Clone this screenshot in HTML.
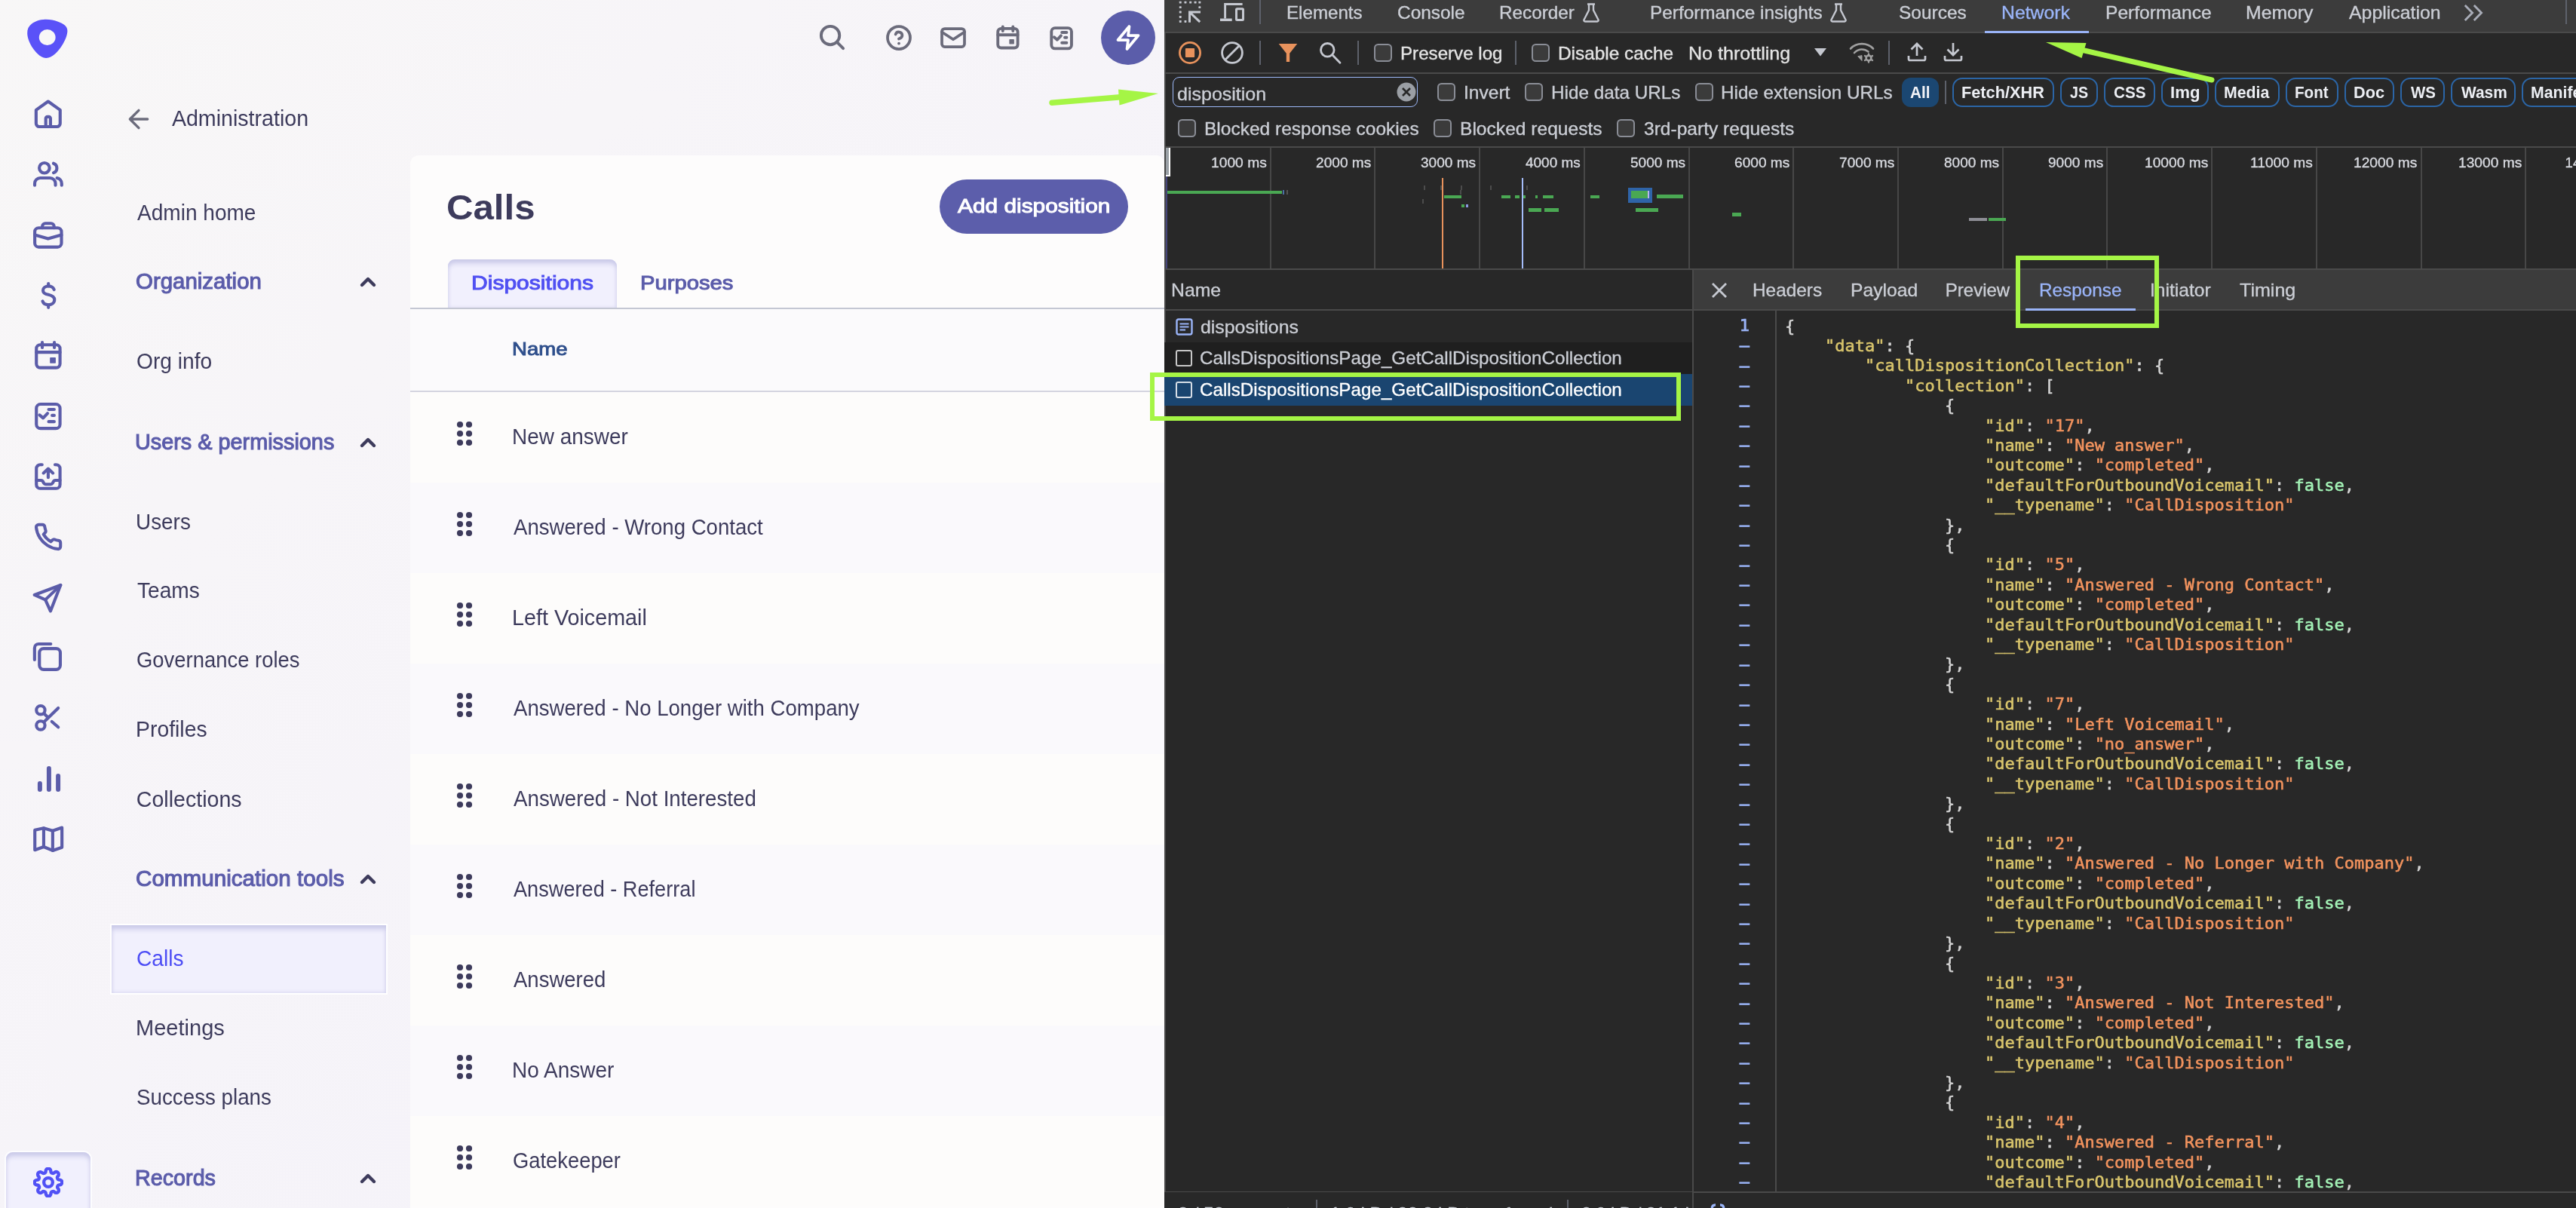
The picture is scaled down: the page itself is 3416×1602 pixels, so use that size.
<!DOCTYPE html>
<html lang="en"><head><meta charset="utf-8"><title>Calls - Dispositions</title><style>
html,body{margin:0;padding:0}
body{width:3416px;height:1602px;overflow:hidden;position:relative;background:#f7f6f8;font-family:"Liberation Sans",sans-serif;}
.b{position:absolute;box-sizing:border-box}
.t{position:absolute;white-space:nowrap;line-height:1;transform-origin:0 50%;}
.m{font-family:"DejaVu Sans Mono","Liberation Mono",monospace}
.cb{position:absolute;box-sizing:border-box;width:24px;height:24px;border:2px solid #8a8d96;border-radius:5.5px;background:#3b3b3b}
.pill{position:absolute;box-sizing:border-box;height:39px;top:103px;border:2px solid #2b65a6;border-radius:13px}
.k{color:#d9c56c}.s{color:#f2935e}.a{color:#a3f2b6}
</style></head>
<body>
<div id="root" style="position:absolute;left:0;top:0;width:3416px;height:1602px;will-change:transform">
<div class="b" id="app" style="left:0;top:0;width:1544px;height:1602px;background:linear-gradient(135deg,#f8f7f7 0%,#f7f5f8 30%,#f5f3f9 70%,#f3f1fa 100%);overflow:hidden">
<svg class="b" style="left:36px;top:25px" width="54" height="53" viewBox="0 0 54 53"><path d="M23.700 .800C30 .600 36 2 39.600 3.200 44 4.800 48 6.500 50.200 8.800 52.600 11 53.600 14 53.400 16.800 53 21 52 24.500 50.200 28 47 35 42 42 37 46.600 33 50 29 52 25 51.900 21 51.800 17 49.500 13.500 46 11 43.500 9.500 41.500 7.800 39.300 3.500 33 .500 26 .200 19.400 0 14 2 9.800 5.850 6.850 10 3.500 16.500 1 23.700 .800Z" fill="#5a52f8"/><ellipse cx="26.700" cy="24.600" rx="10.900" ry="10.500" fill="#f8f7f7"/></svg>
<svg class="b" style="left:42.0px;top:129.0px;color:#5b5ca9;" width="44" height="44" viewBox="0 0 24 24" fill="none" stroke="#5b5ca9" stroke-width="2.25" stroke-linecap="round" stroke-linejoin="round"><path d="M3.2 9.2 11.9 3l8.7 6.2V19a2.300 2.300 0 0 1-2.300 2.300H5.500A2.300 2.300 0 0 1 3.200 19z"/><path d="M10.200 21.300v-6a1.200 1.200 0 0 1 1.200-1.200h1a1.200 1.200 0 0 1 1.200 1.200v6"/></svg>
<svg class="b" style="left:42.0px;top:209.0px;color:#5b5ca9;" width="44" height="44" viewBox="0 0 24 24" fill="none" stroke="#5b5ca9" stroke-width="2.25" stroke-linecap="round" stroke-linejoin="round"><circle cx="9.200" cy="7.500" r="3.700"/><path d="M2.200 20v-1.300a4 4 0 0 1 4-4h7a4 4 0 0 1 4 4V20"/><path d="M15.800 4.200a3.600 3.600 0 0 1 0 6.800"/><path d="M18.300 14.800a4 4 0 0 1 3.400 4V20"/></svg>
<svg class="b" style="left:42.0px;top:290.0px;color:#5b5ca9;" width="44" height="44" viewBox="0 0 24 24" fill="none" stroke="#5b5ca9" stroke-width="2.25" stroke-linecap="round" stroke-linejoin="round"><rect x="2.250" y="6.700" width="19.300" height="13.800" rx="2.800"/><path d="M7.700 6.700V5.600a2.200 2.200 0 0 1 2.200-2.200h4.100a2.200 2.200 0 0 1 2.200 2.200v1.100"/><path d="M2.250 11.700l9.600 2.800 9.700-2.800"/></svg>
<svg class="b" style="left:42.0px;top:369.0px;color:#5b5ca9;" width="44" height="44" viewBox="0 0 24 24" fill="none" stroke="#5b5ca9" stroke-width="2.25" stroke-linecap="round" stroke-linejoin="round"><path d="M12.100 3.800v1.900M12.100 19.200v2"/><path d="M16.200 8.200C15.600 6.600 14.200 5.700 12.200 5.700 9.800 5.700 8.200 7 8.200 8.800c0 1.800 1.400 2.600 3.900 3.100 2.600.6 4.400 1.600 4.400 3.700 0 2.200-1.900 3.600-4.400 3.600-2.200 0-3.700-1-4.200-2.600"/></svg>
<svg class="b" style="left:42.0px;top:449.0px;color:#5b5ca9;" width="44" height="44" viewBox="0 0 24 24" fill="none" stroke="#5b5ca9" stroke-width="2.25" stroke-linecap="round" stroke-linejoin="round"><rect x="3.400" y="4.500" width="17.100" height="16.600" rx="2.800"/><path d="M16.400 2.800v3.700M7.650 2.800v3.700M3.400 9.900h17.100"/><rect x="13.600" y="14.100" width="3.400" height="3.300" fill="currentColor" stroke-width="0.800"/></svg>
<svg class="b" style="left:42.0px;top:530.0px;color:#5b5ca9;" width="44" height="44" viewBox="0 0 24 24" fill="none" stroke="#5b5ca9" stroke-width="2.25" stroke-linecap="round" stroke-linejoin="round"><rect x="3.400" y="3.300" width="17.100" height="17.500" rx="3"/><path d="M5.700 11.100l2.600 2.200 3.200-3.400"/><path d="M12.300 7.100h4M14.800 11.400h1.500M12.300 15.900h4"/></svg>
<svg class="b" style="left:42.0px;top:610.0px;color:#5b5ca9;" width="44" height="44" viewBox="0 0 24 24" fill="none" stroke="#5b5ca9" stroke-width="2.25" stroke-linecap="round" stroke-linejoin="round"><path d="M7.500 3.400H6.200a2.800 2.800 0 0 0-2.800 2.800v11.600a2.800 2.800 0 0 0 2.800 2.800h11.500a2.800 2.800 0 0 0 2.800-2.800V6.200a2.800 2.800 0 0 0-2.800-2.800H16.900"/><path d="M11.950 12.700V6.400M8.500 9.500l3.450-3.200 3.450 3.200"/><path d="M3.400 14.700h3.400c.6 0 1 .3 1.300.8l.7 1.300c.3.500.8.800 1.300.800h3.700c.600 0 1-.300 1.300-.800l.7-1.300c.3-.5.800-.8 1.300-.8h3.400"/></svg>
<svg class="b" style="left:42.1px;top:690.0px;color:#5b5ca9;" width="44" height="44" viewBox="0 0 24 24" fill="none" stroke="#5b5ca9" stroke-width="2.25" stroke-linecap="round" stroke-linejoin="round"><g transform="translate(12 12) scale(.885) translate(-12 -12)" stroke-width="2.500"><path d="M22 16.920v3a2 2 0 0 1-2.180 2 19.790 19.790 0 0 1-8.630-3.070 19.500 19.500 0 0 1-6-6 19.790 19.790 0 0 1-3.070-8.670A2 2 0 0 1 4.110 2h3a2 2 0 0 1 2 1.720 12.840 12.840 0 0 0 .7 2.810 2 2 0 0 1-.45 2.110L8.090 9.910a16 16 0 0 0 6 6l1.270-1.270a2 2 0 0 1 2.110-.45 12.840 12.840 0 0 0 2.810.7A2 2 0 0 1 22 16.920z"/></g></svg>
<svg class="b" style="left:42.0px;top:771.0px;color:#5b5ca9;" width="44" height="44" viewBox="0 0 24 24" fill="none" stroke="#5b5ca9" stroke-width="2.25" stroke-linecap="round" stroke-linejoin="round"><path d="M20.900 2.700 2 9.800l7.900 3.500 3.700 8.200z"/><path d="M9.900 13.300 20.900 2.700"/></svg>
<svg class="b" style="left:42.0px;top:849.0px;color:#5b5ca9;" width="44" height="44" viewBox="0 0 24 24" fill="none" stroke="#5b5ca9" stroke-width="2.25" stroke-linecap="round" stroke-linejoin="round"><rect x="5.600" y="6.050" width="15.100" height="15.150" rx="3"/><path d="M13.800 2.700H5.100a3 3 0 0 0-3 3v8.500"/></svg>
<svg class="b" style="left:42.0px;top:930.0px;color:#5b5ca9;" width="44" height="44" viewBox="0 0 24 24" fill="none" stroke="#5b5ca9" stroke-width="2.25" stroke-linecap="round" stroke-linejoin="round"><circle cx="6.500" cy="6.400" r="3.100"/><circle cx="6.500" cy="17.400" r="3.100"/><path d="M19.200 4.900 9 14.900M14.600 14.700l4.600 4M8.900 8.900l2.800 2.700"/></svg>
<svg class="b" style="left:43.0px;top:1011.0px;color:#5b5ca9;" width="44" height="44" viewBox="0 0 24 24" fill="none" stroke="#5b5ca9" stroke-width="2.25" stroke-linecap="round" stroke-linejoin="round"><path d="M11.950 19.600V4.300M18.600 19.600V9.800M5.400 19.600v-4.400" stroke-width="3.250"/></svg>
<svg class="b" style="left:42.0px;top:1090.0px;color:#5b5ca9;" width="44" height="44" viewBox="0 0 24 24" fill="none" stroke="#5b5ca9" stroke-width="2.25" stroke-linecap="round" stroke-linejoin="round"><path d="M2.300 5.900v14.400l6.400-2.300 6.500 2.700 6.700-2.300V4.100l-6.700 2.300-6.500-1.900z"/><path d="M8.700 4.500V18M15.200 6.400v14.300"/></svg>
<div class="b" style="left:8px;top:1528px;width:112px;height:90px;border-radius:9px;background:#f1f0fd;box-shadow:inset 0 8px 7px -3px #c9c9e8, inset 0 0 5px 1px #d9d8f1, 0 0 0 2px #fdfdff"></div>
<svg class="b" style="left:43.8px;top:1548.0px;" width="40" height="40" viewBox="0 0 24 24" fill="none" stroke="#5151f5" stroke-width="2.6" stroke-linecap="round" stroke-linejoin="round"><circle cx="12" cy="12" r="3.500"/><path d="M19.4 15a1.65 1.65 0 0 0 .33 1.82l.06.06a2 2 0 0 1 0 2.83 2 2 0 0 1-2.83 0l-.06-.06a1.65 1.65 0 0 0-1.82-.33 1.65 1.65 0 0 0-1 1.51V21a2 2 0 0 1-2 2 2 2 0 0 1-2-2v-.09A1.65 1.65 0 0 0 9 19.4a1.65 1.65 0 0 0-1.82.33l-.06.06a2 2 0 0 1-2.83 0 2 2 0 0 1 0-2.83l.06-.06a1.65 1.65 0 0 0 .33-1.82 1.65 1.65 0 0 0-1.51-1H3a2 2 0 0 1-2-2 2 2 0 0 1 2-2h.09A1.65 1.65 0 0 0 4.6 9a1.65 1.65 0 0 0-.33-1.82l-.06-.06a2 2 0 0 1 0-2.83 2 2 0 0 1 2.83 0l.06.06a1.65 1.65 0 0 0 1.82.33H9a1.65 1.65 0 0 0 1-1.51V3a2 2 0 0 1 2-2 2 2 0 0 1 2 2v.09a1.65 1.65 0 0 0 1 1.51 1.65 1.65 0 0 0 1.82-.33l.06-.06a2 2 0 0 1 2.83 0 2 2 0 0 1 0 2.83l-.06.06a1.65 1.65 0 0 0-.33 1.82V9a1.65 1.65 0 0 0 1.51 1H21a2 2 0 0 1 2 2 2 2 0 0 1-2 2h-.09a1.65 1.65 0 0 0-1.51 1z"/></svg>
<svg class="b" style="left:164.0px;top:138.0px;" width="40" height="40" viewBox="0 0 24 24" fill="none" stroke="#6b6b7b" stroke-width="2" stroke-linecap="round" stroke-linejoin="round"><path d="M19 12H5M12 19l-7-7 7-7"/></svg>
<span class="t" style="left:227.9px;top:142.9px;font-size:28.6px;color:#3d3b5c;">Administration</span>
<span class="t" style="left:182.2px;top:268.2px;font-size:28.6px;color:#3d3b5c;transform:scaleX(0.9810);">Admin home</span>
<span class="t" style="left:180.0px;top:358.7px;font-size:28.6px;color:#5b5caa;-webkit-text-stroke:1.09px;transform:scaleX(1.0293);">Organization</span>
<svg class="b" style="left:472.0px;top:358.0px;" width="32" height="32" viewBox="0 0 24 24" fill="none" stroke="#3d3b5c" stroke-width="3.3" stroke-linecap="round" stroke-linejoin="round"><path d="M6 15l6-6 6 6"/></svg>
<span class="t" style="left:181.0px;top:465.2px;font-size:28.6px;color:#3d3b5c;transform:scaleX(0.9851);">Org info</span>
<span class="t" style="left:179.2px;top:571.5px;font-size:28.6px;color:#5b5caa;-webkit-text-stroke:1.09px;transform:scaleX(1.0081);">Users &amp; permissions</span>
<svg class="b" style="left:472.0px;top:570.8px;" width="32" height="32" viewBox="0 0 24 24" fill="none" stroke="#3d3b5c" stroke-width="3.3" stroke-linecap="round" stroke-linejoin="round"><path d="M6 15l6-6 6 6"/></svg>
<span class="t" style="left:180.1px;top:677.7px;font-size:28.6px;color:#3d3b5c;transform:scaleX(0.9756);">Users</span>
<span class="t" style="left:181.7px;top:769.2px;font-size:28.6px;color:#3d3b5c;transform:scaleX(0.9835);">Teams</span>
<span class="t" style="left:180.9px;top:861.2px;font-size:28.6px;color:#3d3b5c;transform:scaleX(0.9594);">Governance roles</span>
<span class="t" style="left:180.0px;top:953.2px;font-size:28.6px;color:#3d3b5c;transform:scaleX(0.9925);">Profiles</span>
<span class="t" style="left:180.8px;top:1045.6px;font-size:28.6px;color:#3d3b5c;">Collections</span>
<span class="t" style="left:179.9px;top:1150.7px;font-size:28.6px;color:#5b5caa;-webkit-text-stroke:1.09px;transform:scaleX(1.0360);">Communication tools</span>
<svg class="b" style="left:472.0px;top:1150.0px;" width="32" height="32" viewBox="0 0 24 24" fill="none" stroke="#3d3b5c" stroke-width="3.3" stroke-linecap="round" stroke-linejoin="round"><path d="M6 15l6-6 6 6"/></svg>
<div class="b" style="left:146px;top:1224.5px;width:368px;height:94.5px;background:#f1f0fd;border:2.5px solid #ffffff;box-shadow:inset 0 8px 7px -3px #c9c9e8, inset 0 0 5px 1px #d9d8f1"></div>
<span class="t" style="left:180.9px;top:1257.2px;font-size:28.6px;color:#4d4df5;transform:scaleX(0.9855);">Calls</span>
<span class="t" style="left:179.9px;top:1348.7px;font-size:28.6px;color:#3d3b5c;transform:scaleX(1.0158);">Meetings</span>
<span class="t" style="left:181.0px;top:1440.7px;font-size:28.6px;color:#3d3b5c;transform:scaleX(0.9705);">Success plans</span>
<span class="t" style="left:179.0px;top:1547.5px;font-size:28.6px;color:#5b5caa;-webkit-text-stroke:1.09px;transform:scaleX(1.0047);">Records</span>
<svg class="b" style="left:472.0px;top:1546.8px;" width="32" height="32" viewBox="0 0 24 24" fill="none" stroke="#3d3b5c" stroke-width="3.3" stroke-linecap="round" stroke-linejoin="round"><path d="M6 15l6-6 6 6"/></svg>
<svg class="b" style="left:1083.5px;top:29.5px;" width="39" height="39" viewBox="0 0 24 24" fill="none" stroke="#6b6b7b" stroke-width="2.4" stroke-linecap="round" stroke-linejoin="round"><circle cx="10.5" cy="10.5" r="7.5"/><path d="M21 21l-5.2-5.2"/></svg>
<svg class="b" style="left:1174.0px;top:31.5px;" width="36" height="36" viewBox="0 0 24 24" fill="none" stroke="#6b6b7b" stroke-width="2.5" stroke-linecap="round" stroke-linejoin="round"><circle cx="12" cy="12" r="10"/><path d="M9.09 9a3 3 0 0 1 5.83 1c0 2-3 3-3 3"/><path d="M12 17h.01"/></svg>
<svg class="b" style="left:1246.0px;top:32.0px;" width="36" height="36" viewBox="0 0 24 24" fill="none" stroke="#6b6b7b" stroke-width="2.5" stroke-linecap="round" stroke-linejoin="round"><rect x="2" y="4" width="20" height="16" rx="2.5"/><path d="M22 7l-10 6.5L2 7"/></svg>
<svg class="b" style="left:1317.5px;top:31.0px;color:#6b6b7b;" width="37" height="37" viewBox="0 0 24 24" fill="none" stroke="#6b6b7b" stroke-width="2.5" stroke-linecap="round" stroke-linejoin="round"><rect x="3.400" y="4.500" width="17.100" height="16.600" rx="2.800"/><path d="M16.400 2.800v3.700M7.650 2.800v3.700M3.400 9.900h17.100"/><rect x="13.600" y="14.100" width="3.400" height="3.300" fill="currentColor" stroke-width="0.800"/></svg>
<svg class="b" style="left:1389.3px;top:31.5px;" width="37.4" height="37.4" viewBox="0 0 24 24" fill="none" stroke="#6b6b7b" stroke-width="2.5" stroke-linecap="round" stroke-linejoin="round"><rect x="3.400" y="3.300" width="17.100" height="17.500" rx="3"/><path d="M5.700 11.100l2.600 2.200 3.200-3.400"/><path d="M12.300 7.100h4M14.800 11.400h1.500M12.300 15.900h4"/></svg>
<div class="b" style="left:1460px;top:14px;width:72px;height:72px;border-radius:50%;background:#5b5daa"></div>
<svg class="b" style="left:1478.0px;top:32.0px;" width="36" height="36" viewBox="0 0 24 24" fill="none" stroke="#ffffff" stroke-width="2.5" stroke-linecap="round" stroke-linejoin="round"><path d="M13 2 3 14h9l-1 8 10-12h-9z"/></svg>
<div class="b" style="left:544px;top:205.500px;width:1000px;height:1420px;border-radius:11.500px 11px 0 0;background:#fdfcfc;overflow:hidden">
</div>
<div class="b" style="left:544px;top:410px;width:1000px;height:110px;background:#fbfafc;"></div>
<div class="b" style="left:594px;top:344px;width:224px;height:65px;border-radius:9px 9px 0 0;background:#f1f0fd;box-shadow:inset 0 8px 7px -3px #c9c9e8, inset 0 0 5px 1px #d9d8f1"></div>
<div class="b" style="left:544px;top:407.5px;width:1000px;height:2.5px;background:#c4c7d3;"></div>
<span class="t" style="left:591.5px;top:251.5px;font-size:46.5px;color:#3d3b5c;font-weight:700;transform:scaleX(1.0575);">Calls</span>
<span class="t" style="left:624.5px;top:361.8px;font-size:26.6px;color:#5050f2;-webkit-text-stroke:1.01px;transform:scaleX(1.1300);">Dispositions</span>
<span class="t" style="left:848.6px;top:361.8px;font-size:26.6px;color:#5b5caa;-webkit-text-stroke:1.01px;transform:scaleX(1.0986);">Purposes</span>
<span class="t" style="left:678.7px;top:450.7px;font-size:24.8px;color:#2f4f8c;-webkit-text-stroke:0.94px;transform:scaleX(1.1108);">Name</span>
<div class="b" style="left:544px;top:518px;width:1000px;height:2.5px;background:#d5d5e0;"></div>
<div class="b" style="left:1246px;top:237.5px;width:250px;height:72px;border-radius:36px;background:#5c5eab"></div>
<span class="t" style="left:1270.4px;top:260.0px;font-size:26.6px;color:#ffffff;-webkit-text-stroke:1.01px;transform:scaleX(1.1224);">Add disposition</span>
<div class="b" style="left:544px;top:520px;width:1000px;height:120px;background:#fdfcfb;"></div>
<svg class="b" style="left:604px;top:557px" width="24" height="36" viewBox="0 0 24 36" fill="#3d3b5c"><circle cx="6" cy="6" r="4.1"/><circle cx="6" cy="18" r="4.1"/><circle cx="6" cy="30" r="4.1"/><circle cx="18" cy="6" r="4.1"/><circle cx="18" cy="18" r="4.1"/><circle cx="18" cy="30" r="4.1"/></svg>
<span class="t" style="left:679.1px;top:565.0px;font-size:28.6px;color:#3d3b5c;transform:scaleX(0.9778);">New answer</span>
<div class="b" style="left:544px;top:640px;width:1000px;height:120px;background:#faf9fc;"></div>
<svg class="b" style="left:604px;top:677px" width="24" height="36" viewBox="0 0 24 36" fill="#3d3b5c"><circle cx="6" cy="6" r="4.1"/><circle cx="6" cy="18" r="4.1"/><circle cx="6" cy="30" r="4.1"/><circle cx="18" cy="6" r="4.1"/><circle cx="18" cy="18" r="4.1"/><circle cx="18" cy="30" r="4.1"/></svg>
<span class="t" style="left:681.3px;top:685.0px;font-size:28.6px;color:#3d3b5c;transform:scaleX(0.9651);">Answered - Wrong Contact</span>
<div class="b" style="left:544px;top:760px;width:1000px;height:120px;background:#fdfcfb;"></div>
<svg class="b" style="left:604px;top:797px" width="24" height="36" viewBox="0 0 24 36" fill="#3d3b5c"><circle cx="6" cy="6" r="4.1"/><circle cx="6" cy="18" r="4.1"/><circle cx="6" cy="30" r="4.1"/><circle cx="18" cy="6" r="4.1"/><circle cx="18" cy="18" r="4.1"/><circle cx="18" cy="30" r="4.1"/></svg>
<span class="t" style="left:679.0px;top:805.0px;font-size:28.6px;color:#3d3b5c;transform:scaleX(1.0046);">Left Voicemail</span>
<div class="b" style="left:544px;top:880px;width:1000px;height:120px;background:#faf9fc;"></div>
<svg class="b" style="left:604px;top:917px" width="24" height="36" viewBox="0 0 24 36" fill="#3d3b5c"><circle cx="6" cy="6" r="4.1"/><circle cx="6" cy="18" r="4.1"/><circle cx="6" cy="30" r="4.1"/><circle cx="18" cy="6" r="4.1"/><circle cx="18" cy="18" r="4.1"/><circle cx="18" cy="30" r="4.1"/></svg>
<span class="t" style="left:681.3px;top:925.0px;font-size:28.6px;color:#3d3b5c;transform:scaleX(0.9651);">Answered - No Longer with Company</span>
<div class="b" style="left:544px;top:1000px;width:1000px;height:120px;background:#fdfcfb;"></div>
<svg class="b" style="left:604px;top:1037px" width="24" height="36" viewBox="0 0 24 36" fill="#3d3b5c"><circle cx="6" cy="6" r="4.1"/><circle cx="6" cy="18" r="4.1"/><circle cx="6" cy="30" r="4.1"/><circle cx="18" cy="6" r="4.1"/><circle cx="18" cy="18" r="4.1"/><circle cx="18" cy="30" r="4.1"/></svg>
<span class="t" style="left:681.3px;top:1045.0px;font-size:28.6px;color:#3d3b5c;transform:scaleX(0.9690);">Answered - Not Interested</span>
<div class="b" style="left:544px;top:1120px;width:1000px;height:120px;background:#faf9fc;"></div>
<svg class="b" style="left:604px;top:1157px" width="24" height="36" viewBox="0 0 24 36" fill="#3d3b5c"><circle cx="6" cy="6" r="4.1"/><circle cx="6" cy="18" r="4.1"/><circle cx="6" cy="30" r="4.1"/><circle cx="18" cy="6" r="4.1"/><circle cx="18" cy="18" r="4.1"/><circle cx="18" cy="30" r="4.1"/></svg>
<span class="t" style="left:681.3px;top:1165.0px;font-size:28.6px;color:#3d3b5c;transform:scaleX(0.9495);">Answered - Referral</span>
<div class="b" style="left:544px;top:1240px;width:1000px;height:120px;background:#fdfcfb;"></div>
<svg class="b" style="left:604px;top:1277px" width="24" height="36" viewBox="0 0 24 36" fill="#3d3b5c"><circle cx="6" cy="6" r="4.1"/><circle cx="6" cy="18" r="4.1"/><circle cx="6" cy="30" r="4.1"/><circle cx="18" cy="6" r="4.1"/><circle cx="18" cy="18" r="4.1"/><circle cx="18" cy="30" r="4.1"/></svg>
<span class="t" style="left:681.3px;top:1285.0px;font-size:28.6px;color:#3d3b5c;transform:scaleX(0.9626);">Answered</span>
<div class="b" style="left:544px;top:1360px;width:1000px;height:120px;background:#faf9fc;"></div>
<svg class="b" style="left:604px;top:1397px" width="24" height="36" viewBox="0 0 24 36" fill="#3d3b5c"><circle cx="6" cy="6" r="4.1"/><circle cx="6" cy="18" r="4.1"/><circle cx="6" cy="30" r="4.1"/><circle cx="18" cy="6" r="4.1"/><circle cx="18" cy="18" r="4.1"/><circle cx="18" cy="30" r="4.1"/></svg>
<span class="t" style="left:679.1px;top:1405.0px;font-size:28.6px;color:#3d3b5c;transform:scaleX(0.9788);">No Answer</span>
<div class="b" style="left:544px;top:1480px;width:1000px;height:120px;background:#fdfcfb;"></div>
<svg class="b" style="left:604px;top:1517px" width="24" height="36" viewBox="0 0 24 36" fill="#3d3b5c"><circle cx="6" cy="6" r="4.1"/><circle cx="6" cy="18" r="4.1"/><circle cx="6" cy="30" r="4.1"/><circle cx="18" cy="6" r="4.1"/><circle cx="18" cy="18" r="4.1"/><circle cx="18" cy="30" r="4.1"/></svg>
<span class="t" style="left:680.0px;top:1525.0px;font-size:28.6px;color:#3d3b5c;transform:scaleX(0.9564);">Gatekeeper</span>
<svg class="b" style="left:1380px;top:100px" width="170" height="60" viewBox="1380 100 170 60"><path d="M1395 136.3 1486 128.8" stroke="#a5f545" stroke-width="7.500" stroke-linecap="round" fill="none"/><path d="M1483 118.5 1536 124 1484.5 139.5z" fill="#a5f545"/></svg>
</div>
<div class="b" id="dt" style="left:1544px;top:0;width:1872px;height:1602px;background:#282828;overflow:hidden"></div>
<div class="b" style="left:1544px;top:0px;width:2px;height:1602px;background:#474747;"></div>
<div class="b" style="left:1544px;top:0px;width:1872px;height:42px;background:#3c3c3c;"></div>
<div class="b" style="left:1544px;top:42px;width:1872px;height:2.2px;background:#4a4a4a;"></div>
<div class="b" style="left:1544px;top:96px;width:1872px;height:2px;background:#4a4a4a;"></div>
<div class="b" style="left:1544px;top:194px;width:1872px;height:2px;background:#4a4a4a;"></div>
<div class="b" style="left:1544px;top:356px;width:1872px;height:2px;background:#4a4a4a;"></div>
<svg class="b" style="left:1563px;top:1px" width="30" height="30" viewBox="0 0 30 30"><g fill="#c5c8d0"><rect x="0.8" y="0.7" width="2.9" height="2.9" rx=".6"/><rect x="7.5" y="0.7" width="2.9" height="2.9" rx=".6"/><rect x="14.2" y="0.7" width="2.9" height="2.9" rx=".6"/><rect x="20.6" y="0.7" width="2.9" height="2.9" rx=".6"/><rect x="26.4" y="0.7" width="2.9" height="2.9" rx=".6"/><rect x="0.8" y="7.15" width="2.9" height="2.9" rx=".6"/><rect x="0.8" y="13.6" width="2.9" height="2.9" rx=".6"/><rect x="0.8" y="20" width="2.9" height="2.9" rx=".6"/><rect x="0.8" y="26" width="2.9" height="2.9" rx=".6"/><rect x="26.4" y="7.15" width="2.9" height="2.9" rx=".6"/><rect x="7.5" y="26" width="2.9" height="2.9" rx=".6"/></g><path d="M14.500 28.700V15H29M14.800 15.300 28.200 28.100" fill="none" stroke="#c5c8d0" stroke-width="3"/></svg>
<svg class="b" style="left:1617px;top:2px" width="34" height="28" viewBox="0 0 34 28" fill="none" stroke="#c5c8d0"><path d="M7.600 22.500V3.500H30.600" stroke-width="2.900"/><path d="M1 24.300h15.700" stroke-width="3.500"/><rect x="22.500" y="9.700" width="9" height="14.900" rx="1" stroke-width="3"/></svg>
<div class="b" style="left:1670px;top:0px;width:2px;height:31.5px;background:#5d616b;"></div>
<span class="t" style="left:1706.0px;top:4.6px;font-size:24px;color:#cbced5;-webkit-text-stroke:0.35px;transform:scaleX(1.0056);">Elements</span>
<span class="t" style="left:1852.5px;top:4.6px;font-size:24px;color:#cbced5;-webkit-text-stroke:0.35px;transform:scaleX(1.0173);">Console</span>
<span class="t" style="left:1988.0px;top:4.6px;font-size:24px;color:#cbced5;-webkit-text-stroke:0.35px;transform:scaleX(1.0120);">Recorder</span>
<span class="t" style="left:2188.0px;top:4.6px;font-size:24px;color:#cbced5;-webkit-text-stroke:0.35px;transform:scaleX(1.0142);">Performance insights</span>
<span class="t" style="left:2517.9px;top:4.6px;font-size:24px;color:#cbced5;-webkit-text-stroke:0.35px;transform:scaleX(1.0193);">Sources</span>
<span class="t" style="left:2654.0px;top:4.6px;font-size:24px;color:#9ab4f8;-webkit-text-stroke:0.35px;transform:scaleX(1.0338);">Network</span>
<span class="t" style="left:2791.5px;top:4.6px;font-size:24px;color:#cbced5;-webkit-text-stroke:0.35px;transform:scaleX(1.0234);">Performance</span>
<span class="t" style="left:2977.6px;top:4.6px;font-size:24px;color:#cbced5;-webkit-text-stroke:0.35px;transform:scaleX(1.0324);">Memory</span>
<span class="t" style="left:3115.0px;top:4.6px;font-size:24px;color:#cbced5;-webkit-text-stroke:0.35px;transform:scaleX(1.0362);">Application</span>
<svg class="b" style="left:2098px;top:4px" width="24" height="26" viewBox="0 0 24 26" fill="none" stroke="#c5c8d0" stroke-width="2.4" stroke-linejoin="round"><path d="M7 1.5h10M9 1.5v8L2.5 22.2a1.6 1.6 0 0 0 1.4 2.3h16.2a1.6 1.6 0 0 0 1.4-2.3L15 9.5v-8"/></svg>
<svg class="b" style="left:2426px;top:4px" width="24" height="26" viewBox="0 0 24 26" fill="none" stroke="#c5c8d0" stroke-width="2.4" stroke-linejoin="round"><path d="M7 1.5h10M9 1.5v8L2.5 22.2a1.6 1.6 0 0 0 1.4 2.3h16.2a1.6 1.6 0 0 0 1.4-2.3L15 9.5v-8"/></svg>
<div class="b" style="left:2632px;top:41px;width:138px;height:3px;background:#9ab4f8;"></div>
<svg class="b" style="left:3266px;top:6px" width="28" height="22" viewBox="0 0 28 22" fill="none" stroke="#a9adb8" stroke-width="2.800"><path d="M2.800 1l9.800 10-9.800 10M14.800 1l9.800 10-9.800 10"/></svg>
<div class="b" style="left:3402.3px;top:0px;width:1.9px;height:32px;background:#5d616b;"></div>
<svg class="b" style="left:1562px;top:54px" width="32" height="32" viewBox="0 0 32 32"><circle cx="16" cy="16" r="13.6" fill="none" stroke="#e8925c" stroke-width="2.8"/><rect x="9.900" y="9.900" width="12.200" height="12.200" rx="1" fill="#e8925c"/></svg>
<svg class="b" style="left:1618px;top:54px" width="32" height="32" viewBox="0 0 32 32" fill="none" stroke="#c5c8d0" stroke-width="2.8"><circle cx="16" cy="16" r="13.4"/><path d="M25.5 6.5 6.5 25.5"/></svg>
<div class="b" style="left:1670px;top:54px;width:2px;height:32px;background:#5d616b;"></div>
<svg class="b" style="left:1694px;top:57px" width="28" height="26" viewBox="0 0 28 26"><path d="M1.700 1h24.600L16.200 13.800V25h-4.400V13.800z" fill="#e8925c"/></svg>
<svg class="b" style="left:1749px;top:56px" width="30" height="30" viewBox="0 0 30 30" fill="none" stroke="#c5c8d0" stroke-width="2.8" stroke-linecap="round"><circle cx="11.300" cy="10.300" r="8.800"/><path d="M17.800 16.800 28 27.200"/></svg>
<div class="b" style="left:1800px;top:54px;width:2px;height:32px;background:#5d616b;"></div>
<div class="cb" style="left:1822px;top:58px"></div>
<span class="t" style="left:1856.8px;top:58.6px;font-size:24px;color:#e4e4e4;-webkit-text-stroke:0.35px;transform:scaleX(1.0060);">Preserve log</span>
<div class="b" style="left:2009px;top:54px;width:2px;height:32px;background:#5d616b;"></div>
<div class="cb" style="left:2031px;top:58px"></div>
<span class="t" style="left:2066.0px;top:58.6px;font-size:24px;color:#e4e4e4;-webkit-text-stroke:0.35px;transform:scaleX(1.0155);">Disable cache</span>
<span class="t" style="left:2238.9px;top:58.6px;font-size:24px;color:#e4e4e4;-webkit-text-stroke:0.35px;transform:scaleX(1.0446);">No throttling</span>
<svg class="b" style="left:2405px;top:63px" width="18" height="12" viewBox="0 0 18 12"><path d="M1 1h16L9 11.5z" fill="#c5c8d0"/></svg>
<svg class="b" style="left:2452px;top:55px" width="34" height="29" viewBox="0 0 34 29" fill="none" stroke="#a0a0a0" stroke-width="2.6" stroke-linecap="round"><path d="M2 9.5C10 1 24 1 32 9.5"/><path d="M7 15C12 9.5 20 9 25.5 13.5"/><path d="M12 20l5 5.5V19z" fill="#a0a0a0" stroke-width="1"/><circle cx="26" cy="22" r="3.4"/><path d="M26 16.3v1.6M26 26.1v1.6M20.9 19l1.4.8M29.7 24.2l1.4.8M20.9 25l1.4-.8M29.7 19.8l1.4-.8" stroke-width="2.2"/></svg>
<div class="b" style="left:2504px;top:54px;width:2px;height:32px;background:#5d616b;"></div>
<svg class="b" style="left:2529px;top:54.700px" width="26" height="27" viewBox="0 0 26 27" fill="none" stroke="#c5c8d0" stroke-width="2.7"><path d="M13 19V3M5.5 10.5 13 3l7.500 7.500M2 19v4.500a1.500 1.500 0 0 0 1.500 1.500h19a1.500 1.500 0 0 0 1.500-1.500V19"/></svg>
<svg class="b" style="left:2577px;top:54.700px" width="26" height="27" viewBox="0 0 26 27" fill="none" stroke="#c5c8d0" stroke-width="2.7"><path d="M13 2v16M5.500 10.500 13 18l7.500-7.500M2 19v4.500a1.500 1.500 0 0 0 1.500 1.500h19a1.500 1.500 0 0 0 1.500-1.500V19"/></svg>
<div class="b" style="left:1554.5px;top:102px;width:325px;height:40px;border:1.800px solid #9db8f7;border-radius:9px;background:#282828"></div>
<span class="t" style="left:1561.4px;top:113.1px;font-size:24px;color:#cbced5;-webkit-text-stroke:0.35px;transform:scaleX(1.0421);">disposition</span>
<svg class="b" style="left:1851.5px;top:109px" width="26" height="26" viewBox="0 0 26 26"><circle cx="13" cy="13" r="12.500" fill="#9b9fa5"/><path d="M8 8l10 10M18 8 8 18" stroke="#282828" stroke-width="2.6" fill="none"/></svg>
<div class="cb" style="left:1906px;top:110px"></div>
<span class="t" style="left:1940.7px;top:110.6px;font-size:24px;color:#cbced5;-webkit-text-stroke:0.35px;transform:scaleX(1.0237);">Invert</span>
<div class="cb" style="left:2022px;top:110px"></div>
<span class="t" style="left:2056.5px;top:110.6px;font-size:24px;color:#cbced5;-webkit-text-stroke:0.35px;transform:scaleX(1.0115);">Hide data URLs</span>
<div class="cb" style="left:2248px;top:110px"></div>
<span class="t" style="left:2282.0px;top:110.6px;font-size:24px;color:#cbced5;-webkit-text-stroke:0.35px;transform:scaleX(1.0096);">Hide extension URLs</span>
<div class="b" style="left:2522px;top:103px;width:49px;height:39px;border-radius:12px;background:#1b4772"></div>
<span class="t" style="left:2533.0px;top:113.0px;font-size:21.5px;color:#f2f3f7;font-weight:700;transform:scaleX(0.9640);">All</span>
<div class="b" style="left:2579px;top:107px;width:2px;height:31px;background:#5d616b;"></div>
<div class="pill" style="left:2589px;width:134.5px"></div>
<span class="t" style="left:2601.0px;top:113.0px;font-size:21.5px;color:#eceef3;font-weight:700;transform:scaleX(1.0110);">Fetch/XHR</span>
<div class="pill" style="left:2732px;width:49.5px"></div>
<span class="t" style="left:2745.2px;top:113.0px;font-size:21.5px;color:#eceef3;font-weight:700;transform:scaleX(0.9151);">JS</span>
<div class="pill" style="left:2790px;width:67.5px"></div>
<span class="t" style="left:2802.6px;top:113.0px;font-size:21.5px;color:#eceef3;font-weight:700;transform:scaleX(0.9650);">CSS</span>
<div class="pill" style="left:2866px;width:63.0px"></div>
<span class="t" style="left:2878.0px;top:113.0px;font-size:21.5px;color:#eceef3;font-weight:700;transform:scaleX(1.0326);">Img</span>
<div class="pill" style="left:2937px;width:85.5px"></div>
<span class="t" style="left:2949.1px;top:113.0px;font-size:21.5px;color:#eceef3;font-weight:700;transform:scaleX(0.9894);">Media</span>
<div class="pill" style="left:3031px;width:69.5px"></div>
<span class="t" style="left:3043.1px;top:113.0px;font-size:21.5px;color:#eceef3;font-weight:700;transform:scaleX(0.9586);">Font</span>
<div class="pill" style="left:3109px;width:65.5px"></div>
<span class="t" style="left:3121.0px;top:113.0px;font-size:21.5px;color:#eceef3;font-weight:700;transform:scaleX(1.0117);">Doc</span>
<div class="pill" style="left:3183px;width:58.7px"></div>
<span class="t" style="left:3196.5px;top:113.0px;font-size:21.5px;color:#eceef3;font-weight:700;transform:scaleX(0.9534);">WS</span>
<div class="pill" style="left:3250px;width:86.0px"></div>
<span class="t" style="left:3263.5px;top:113.0px;font-size:21.5px;color:#eceef3;font-weight:700;transform:scaleX(0.9727);">Wasm</span>
<div class="pill" style="left:3344px;width:111.0px"></div>
<span class="t" style="left:3356.1px;top:113.0px;font-size:21.5px;color:#eceef3;font-weight:700;transform:scaleX(0.9882);">Manifest</span>
<div class="cb" style="left:1562px;top:158px"></div>
<span class="t" style="left:1597.0px;top:158.6px;font-size:24px;color:#cbced5;-webkit-text-stroke:0.35px;transform:scaleX(1.0209);">Blocked response cookies</span>
<div class="cb" style="left:1901px;top:158px"></div>
<span class="t" style="left:1936.0px;top:158.6px;font-size:24px;color:#cbced5;-webkit-text-stroke:0.35px;transform:scaleX(1.0247);">Blocked requests</span>
<div class="cb" style="left:2144px;top:158px"></div>
<span class="t" style="left:2179.6px;top:158.6px;font-size:24px;color:#cbced5;-webkit-text-stroke:0.35px;transform:scaleX(1.0235);">3rd-party requests</span>
<div class="b" style="left:1546px;top:196px;width:2px;height:160px;background:#45457a;"></div>
<div class="b" style="left:1546px;top:196px;width:6px;height:38px;background:#9aa0a6;border-right:2px solid #fff;border-bottom:2.5px solid #fff"></div>
<div class="b" style="left:1684px;top:196px;width:2px;height:160px;background:#474747;"></div>
<span class="t" style="left:1606.1px;top:207.4px;font-size:18.6px;color:#d8dae0;-webkit-text-stroke:0.35px;transform:scaleX(1.0347);">1000 ms</span>
<div class="b" style="left:1822px;top:196px;width:2px;height:160px;background:#474747;"></div>
<span class="t" style="left:1745.3px;top:207.4px;font-size:18.6px;color:#d8dae0;-webkit-text-stroke:0.35px;transform:scaleX(1.0275);">2000 ms</span>
<div class="b" style="left:1961px;top:196px;width:2px;height:160px;background:#474747;"></div>
<span class="t" style="left:1884.2px;top:207.4px;font-size:18.6px;color:#d8dae0;-webkit-text-stroke:0.35px;transform:scaleX(1.0242);">3000 ms</span>
<div class="b" style="left:2100px;top:196px;width:2px;height:160px;background:#474747;"></div>
<span class="t" style="left:2023.2px;top:207.4px;font-size:18.6px;color:#d8dae0;-webkit-text-stroke:0.35px;transform:scaleX(1.0201);">4000 ms</span>
<div class="b" style="left:2239px;top:196px;width:2px;height:160px;background:#474747;"></div>
<span class="t" style="left:2161.6px;top:207.4px;font-size:18.6px;color:#d8dae0;-webkit-text-stroke:0.35px;transform:scaleX(1.0247);">5000 ms</span>
<div class="b" style="left:2377px;top:196px;width:2px;height:160px;background:#474747;"></div>
<span class="t" style="left:2300.1px;top:207.4px;font-size:18.6px;color:#d8dae0;-webkit-text-stroke:0.35px;transform:scaleX(1.0277);">6000 ms</span>
<div class="b" style="left:2516px;top:196px;width:2px;height:160px;background:#474747;"></div>
<span class="t" style="left:2438.8px;top:207.4px;font-size:18.6px;color:#d8dae0;-webkit-text-stroke:0.35px;transform:scaleX(1.0278);">7000 ms</span>
<div class="b" style="left:2655px;top:196px;width:2px;height:160px;background:#474747;"></div>
<span class="t" style="left:2577.6px;top:207.4px;font-size:18.6px;color:#d8dae0;-webkit-text-stroke:0.35px;transform:scaleX(1.0257);">8000 ms</span>
<div class="b" style="left:2793px;top:196px;width:2px;height:160px;background:#474747;"></div>
<span class="t" style="left:2716.3px;top:207.4px;font-size:18.6px;color:#d8dae0;-webkit-text-stroke:0.35px;transform:scaleX(1.0266);">9000 ms</span>
<div class="b" style="left:2932px;top:196px;width:2px;height:160px;background:#474747;"></div>
<span class="t" style="left:2843.9px;top:207.4px;font-size:18.6px;color:#d8dae0;-webkit-text-stroke:0.35px;transform:scaleX(1.0315);">10000 ms</span>
<div class="b" style="left:3071px;top:196px;width:2px;height:160px;background:#474747;"></div>
<span class="t" style="left:2984.0px;top:207.4px;font-size:18.6px;color:#d8dae0;-webkit-text-stroke:0.35px;transform:scaleX(1.0319);">11000 ms</span>
<div class="b" style="left:3210px;top:196px;width:2px;height:160px;background:#474747;"></div>
<span class="t" style="left:3121.3px;top:207.4px;font-size:18.6px;color:#d8dae0;-webkit-text-stroke:0.35px;transform:scaleX(1.0315);">12000 ms</span>
<div class="b" style="left:3348px;top:196px;width:2px;height:160px;background:#474747;"></div>
<span class="t" style="left:3260.0px;top:207.4px;font-size:18.6px;color:#d8dae0;-webkit-text-stroke:0.35px;transform:scaleX(1.0315);">13000 ms</span>
<span class="t" style="left:3401.6px;top:207.4px;font-size:18.6px;color:#d8dae0;-webkit-text-stroke:0.35px;">14000 ms</span>
<div class="b" style="left:1548px;top:252.7px;width:152px;height:4.6px;background:#4aa853;"></div>
<div class="b" style="left:1701px;top:252px;width:2px;height:6px;background:#4a6fa5;"></div>
<div class="b" style="left:1706px;top:252px;width:2px;height:6px;background:#555;"></div>
<div class="b" style="left:1912px;top:236px;width:2.1px;height:120px;background:#e8925c;"></div>
<div class="b" style="left:2018px;top:236px;width:2.1px;height:120px;background:#a5bdfa;"></div>
<div class="b" style="left:1914.6px;top:258.6px;width:23.8px;height:4.8px;background:#4aa853;"></div>
<div class="b" style="left:1938px;top:271.0px;width:4px;height:4px;background:#4aa853;"></div>
<div class="b" style="left:1943.6px;top:271px;width:3.5px;height:4px;background:#8a9ae0;"></div>
<div class="b" style="left:1990.5px;top:258.6px;width:12.5px;height:4.8px;background:#4aa853;"></div>
<div class="b" style="left:2009px;top:258.6px;width:6px;height:4.8px;background:#4aa853;"></div>
<div class="b" style="left:2019.6px;top:258.6px;width:3.6px;height:4.8px;background:#4aa853;"></div>
<div class="b" style="left:2036px;top:258.6px;width:3px;height:4.8px;background:#4aa853;"></div>
<div class="b" style="left:2046px;top:258.6px;width:14.2px;height:4.8px;background:#4aa853;"></div>
<div class="b" style="left:2026.8px;top:276.4px;width:17.2px;height:4.8px;background:#4aa853;"></div>
<div class="b" style="left:2048px;top:276.4px;width:19.3px;height:4.8px;background:#4aa853;"></div>
<div class="b" style="left:2108.5px;top:258.6px;width:12.0px;height:4.8px;background:#4aa853;"></div>
<div class="b" style="left:2159.3px;top:248.75px;width:32px;height:20px;background:#2f64a8;"></div>
<div class="b" style="left:2163.2px;top:252.9px;width:22px;height:10.1px;background:#4aa853;"></div>
<div class="b" style="left:2185.2px;top:252.9px;width:1.8px;height:10.1px;background:#b9b4f0;"></div>
<div class="b" style="left:2197px;top:258.4px;width:35px;height:4.8px;background:#4aa853;"></div>
<div class="b" style="left:2168.5px;top:276.4px;width:30.5px;height:4.8px;background:#4aa853;"></div>
<div class="b" style="left:2297px;top:282.4px;width:12px;height:4.8px;background:#4aa853;"></div>
<div class="b" style="left:2611px;top:289.0px;width:24px;height:4px;background:#8e8e96;"></div>
<div class="b" style="left:2636.5px;top:288.6px;width:23.5px;height:4.8px;background:#4aa853;"></div>
<div class="b" style="left:1888px;top:246px;width:2px;height:6px;background:#4c4c4c;"></div>
<div class="b" style="left:1910px;top:246px;width:2px;height:6px;background:#4c4c4c;"></div>
<div class="b" style="left:1937px;top:246px;width:2px;height:6px;background:#4c4c4c;"></div>
<div class="b" style="left:1976px;top:246px;width:2px;height:6px;background:#4c4c4c;"></div>
<div class="b" style="left:2024px;top:246px;width:2px;height:6px;background:#4c4c4c;"></div>
<div class="b" style="left:1886px;top:264px;width:2px;height:6px;background:#4c4c4c;"></div>
<div class="b" style="left:1936px;top:252px;width:2px;height:6px;background:#4c4c4c;"></div>
<div class="b" style="left:2246px;top:358px;width:1170px;height:52px;background:#3c3c3c;"></div>
<div class="b" style="left:1544px;top:410px;width:1872px;height:2px;background:#4a4a4a;"></div>
<div class="b" style="left:1544px;top:454px;width:700px;height:42px;background:#1f1f1f;"></div>
<div class="b" style="left:1544px;top:496px;width:700px;height:42px;background:#1a4570;"></div>
<div class="b" style="left:2244px;top:358px;width:2px;height:1244px;background:#4a4a4a;"></div>
<span class="t" style="left:1552.5px;top:373.1px;font-size:24px;color:#cbced5;-webkit-text-stroke:0.35px;transform:scaleX(1.0330);">Name</span>
<svg class="b" style="left:1558.500px;top:421.500px" width="23" height="23" viewBox="0 0 23 23" fill="none" stroke="#9ab4f8" stroke-width="2.400"><rect x="1.500" y="1.500" width="20" height="20" rx="2.500"/><path d="M5.500 7.500h12M5.500 11.500h12M5.500 15.500h7.500" stroke-width="2"/></svg>
<span class="t" style="left:1591.5px;top:422.4px;font-size:24px;color:#cbced5;-webkit-text-stroke:0.35px;transform:scaleX(1.0362);">dispositions</span>
<div class="b" style="left:1559px;top:464px;width:22px;height:22px;border:2.4px solid #c7c7c7;border-radius:3px"></div>
<span class="t" style="left:1591.3px;top:463.1px;font-size:24px;color:#cbced5;-webkit-text-stroke:0.35px;transform:scaleX(1.0088);">CallsDispositionsPage_GetCallDispositionCollection</span>
<div class="b" style="left:1559px;top:506px;width:22px;height:22px;border:2.4px solid #d6dde6;border-radius:3px"></div>
<span class="t" style="left:1591.3px;top:505.1px;font-size:24px;color:#ffffff;-webkit-text-stroke:0.35px;transform:scaleX(1.0088);">CallsDispositionsPage_GetCallDispositionCollection</span>
<svg class="b" style="left:2269px;top:373.500px" width="22" height="22" viewBox="0 0 22 22" fill="none" stroke="#c5c8d0" stroke-width="2.800"><path d="M2 2l18 18M20 2 2 20"/></svg>
<span class="t" style="left:2323.8px;top:373.1px;font-size:24px;color:#cbced5;-webkit-text-stroke:0.35px;transform:scaleX(1.0156);">Headers</span>
<span class="t" style="left:2453.5px;top:373.1px;font-size:24px;color:#cbced5;-webkit-text-stroke:0.35px;transform:scaleX(1.0275);">Payload</span>
<span class="t" style="left:2579.8px;top:373.1px;font-size:24px;color:#cbced5;-webkit-text-stroke:0.35px;">Preview</span>
<span class="t" style="left:2704.0px;top:373.1px;font-size:24px;color:#9ab4f8;-webkit-text-stroke:0.35px;transform:scaleX(1.0139);">Response</span>
<span class="t" style="left:2850.7px;top:373.1px;font-size:24px;color:#cbced5;-webkit-text-stroke:0.35px;transform:scaleX(1.0251);">Initiator</span>
<span class="t" style="left:2970.0px;top:373.1px;font-size:24px;color:#cbced5;-webkit-text-stroke:0.35px;transform:scaleX(1.0444);">Timing</span>
<div class="b" style="left:2686px;top:408.5px;width:146px;height:3.5px;background:#9ab4f8;"></div>
<div class="b" style="left:2354.3px;top:412px;width:2px;height:1168px;background:#4a4a4a;"></div>
<pre class="b m" id="code" style="left:2367px;top:419.5px;margin:0;font-size:22px;line-height:26.4px;color:#d4d4d4;-webkit-text-stroke:0.55px">{
    <span class="k">&quot;data&quot;</span>: {
        <span class="k">&quot;callDispositionCollection&quot;</span>: {
            <span class="k">&quot;collection&quot;</span>: [
                {
                    <span class="k">&quot;id&quot;</span>: <span class="s">&quot;17&quot;</span>,
                    <span class="k">&quot;name&quot;</span>: <span class="s">&quot;New answer&quot;</span>,
                    <span class="k">&quot;outcome&quot;</span>: <span class="s">&quot;completed&quot;</span>,
                    <span class="k">&quot;defaultForOutboundVoicemail&quot;</span>: <span class="a">false</span>,
                    <span class="k">&quot;__typename&quot;</span>: <span class="s">&quot;CallDisposition&quot;</span>
                },
                {
                    <span class="k">&quot;id&quot;</span>: <span class="s">&quot;5&quot;</span>,
                    <span class="k">&quot;name&quot;</span>: <span class="s">&quot;Answered - Wrong Contact&quot;</span>,
                    <span class="k">&quot;outcome&quot;</span>: <span class="s">&quot;completed&quot;</span>,
                    <span class="k">&quot;defaultForOutboundVoicemail&quot;</span>: <span class="a">false</span>,
                    <span class="k">&quot;__typename&quot;</span>: <span class="s">&quot;CallDisposition&quot;</span>
                },
                {
                    <span class="k">&quot;id&quot;</span>: <span class="s">&quot;7&quot;</span>,
                    <span class="k">&quot;name&quot;</span>: <span class="s">&quot;Left Voicemail&quot;</span>,
                    <span class="k">&quot;outcome&quot;</span>: <span class="s">&quot;no_answer&quot;</span>,
                    <span class="k">&quot;defaultForOutboundVoicemail&quot;</span>: <span class="a">false</span>,
                    <span class="k">&quot;__typename&quot;</span>: <span class="s">&quot;CallDisposition&quot;</span>
                },
                {
                    <span class="k">&quot;id&quot;</span>: <span class="s">&quot;2&quot;</span>,
                    <span class="k">&quot;name&quot;</span>: <span class="s">&quot;Answered - No Longer with Company&quot;</span>,
                    <span class="k">&quot;outcome&quot;</span>: <span class="s">&quot;completed&quot;</span>,
                    <span class="k">&quot;defaultForOutboundVoicemail&quot;</span>: <span class="a">false</span>,
                    <span class="k">&quot;__typename&quot;</span>: <span class="s">&quot;CallDisposition&quot;</span>
                },
                {
                    <span class="k">&quot;id&quot;</span>: <span class="s">&quot;3&quot;</span>,
                    <span class="k">&quot;name&quot;</span>: <span class="s">&quot;Answered - Not Interested&quot;</span>,
                    <span class="k">&quot;outcome&quot;</span>: <span class="s">&quot;completed&quot;</span>,
                    <span class="k">&quot;defaultForOutboundVoicemail&quot;</span>: <span class="a">false</span>,
                    <span class="k">&quot;__typename&quot;</span>: <span class="s">&quot;CallDisposition&quot;</span>
                },
                {
                    <span class="k">&quot;id&quot;</span>: <span class="s">&quot;4&quot;</span>,
                    <span class="k">&quot;name&quot;</span>: <span class="s">&quot;Answered - Referral&quot;</span>,
                    <span class="k">&quot;outcome&quot;</span>: <span class="s">&quot;completed&quot;</span>,
                    <span class="k">&quot;defaultForOutboundVoicemail&quot;</span>: <span class="a">false</span>,</pre>
<pre class="b m" id="gut" style="left:2280px;top:418.8px;width:40px;text-align:right;margin:0;font-size:22px;line-height:26.4px;color:#9ab4f8;-webkit-text-stroke:0.7px">1
–
–
–
–
–
–
–
–
–
–
–
–
–
–
–
–
–
–
–
–
–
–
–
–
–
–
–
–
–
–
–
–
–
–
–
–
–
–
–
–
–
–
–</pre>
<div class="b" style="left:1544px;top:1579.8px;width:1872px;height:2px;background:#4a4a4a;"></div>
<div class="b" style="left:1544px;top:1581px;width:700px;height:21px;background:#282828;"></div>
<div class="b" style="left:1546px;top:1581px;width:698px;height:21px;overflow:hidden">
<span class="t" style="left:16.1px;top:16.6px;font-size:24px;color:#cbced5;-webkit-text-stroke:0.35px;transform:scaleX(1.0192);">3 / 52 requests</span>
<div class="b" style="left:199.0px;top:10.0px;width:2px;height:20px;background:#5d616b;"></div>
<span class="t" style="left:218.2px;top:16.6px;font-size:24px;color:#cbced5;-webkit-text-stroke:0.35px;transform:scaleX(1.0112);">1.9 kB / 22.3 kB transferred</span>
<div class="b" style="left:532.0px;top:10.0px;width:2px;height:20px;background:#5d616b;"></div>
<span class="t" style="left:550.8px;top:16.6px;font-size:24px;color:#cbced5;-webkit-text-stroke:0.35px;transform:scaleX(0.9735);">2.9 kB / 31.1 kB resources</span>
</div>
<svg class="b" style="left:2265px;top:1596px" width="26" height="28" viewBox="0 0 26 28" fill="none" stroke="#9ab4f8" stroke-width="3.200"><path d="M10 1.800C6.500 1.800 5.200 3.300 5.200 6.300v3.900c0 2.300-1 3.500-3.400 3.800 2.400.300 3.400 1.500 3.400 3.800v3.900c0 3 1.300 4.500 4.800 4.500M16 1.800c3.500 0 4.800 1.500 4.800 4.500v3.900c0 2.300 1 3.500 3.400 3.800-2.400.300-3.400 1.500-3.400 3.800v3.900c0 3-1.300 4.500-4.800 4.500"/></svg>
<div class="b" style="left:1525px;top:494px;width:704px;height:64px;border:6px solid #a5f545"></div>
<div class="b" style="left:2673px;top:339px;width:190px;height:96px;border:6.5px solid #a5f545"></div>
<svg class="b" style="left:2700px;top:40px" width="250" height="80" viewBox="2700 40 250 80"><path d="M2933 106 2762 66.500" stroke="#a5f545" stroke-width="7" stroke-linecap="round" fill="none"/><path d="M2713 56 2766.500 57 2760.500 77z" fill="#a5f545"/></svg>
</div>
</body></html>
